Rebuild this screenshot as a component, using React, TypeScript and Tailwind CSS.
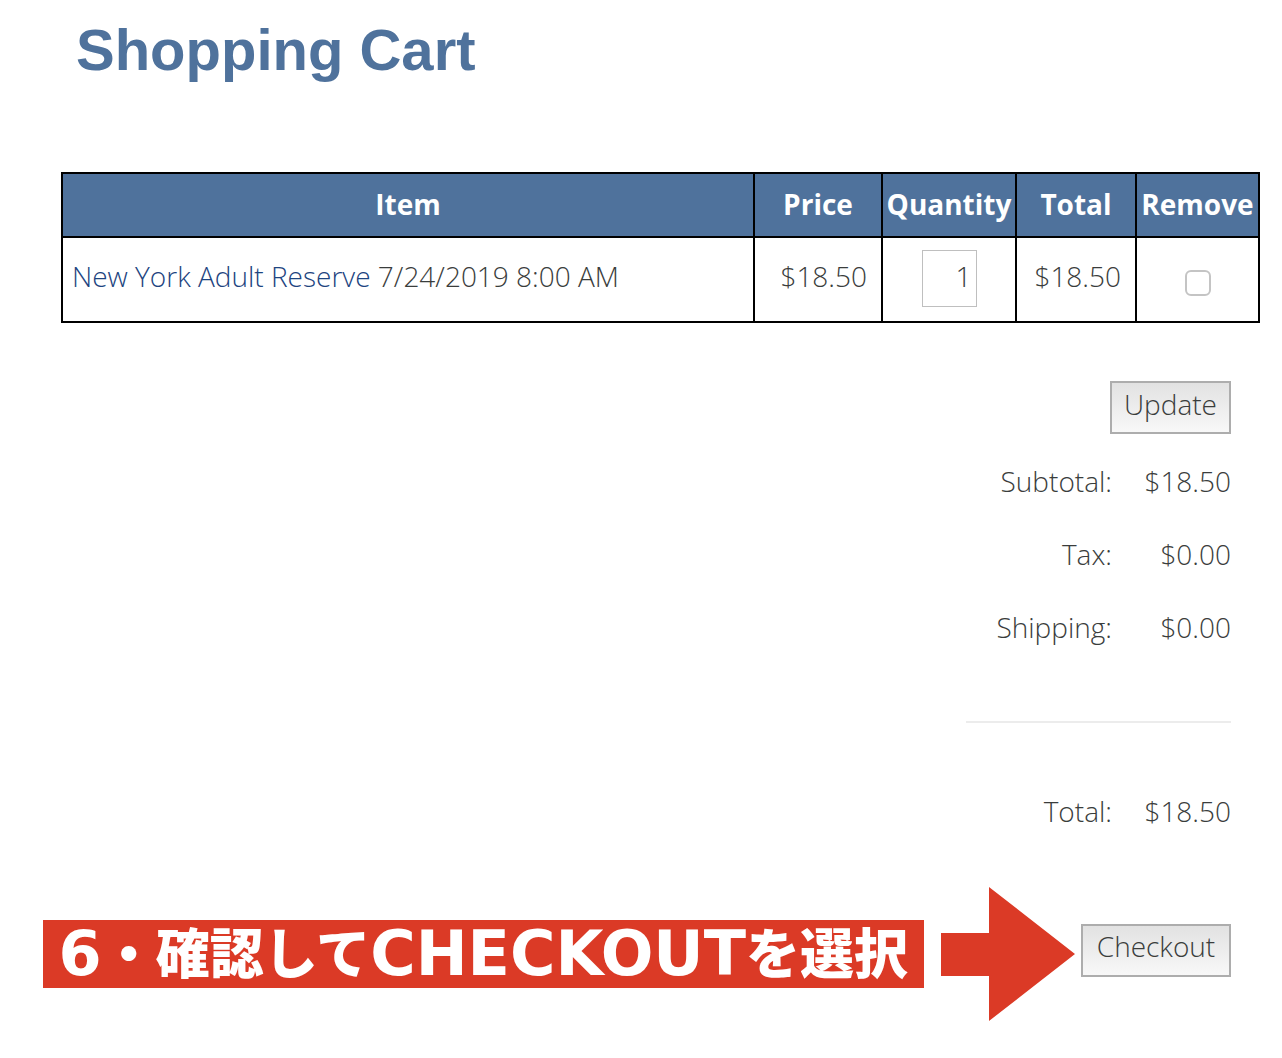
const items = [
  {
    name: "New York Adult Reserve",
    date: "7/24/2019 8:00 AM",
    price: "$18.50",
    quantity: 1,
    total: "$18.50",
  },
];

const summary = [
  { label: "Subtotal:", value: "$18.50" },
  { label: "Tax:", value: "$0.00" },
  { label: "Shipping:", value: "$0.00" },
];

function SummaryRow({ label, value }: { label: string; value: string }) {
  return (
    <div className="flex h-[73px] items-center justify-end text-right">
      <dt>{label}</dt>
      <dd className="w-[119px]">{value}</dd>
    </div>
  );
}

function CartButton({ children, className = "" }: { children: string; className?: string }) {
  return (
    <button
      type="button"
      className={`h-[53px] shrink-0 border-2 border-[#adadad] bg-linear-to-b from-[#e2e2e2] to-[#f8f8f8] px-3 pb-2 leading-9 ${className}`}
    >
      {children}
    </button>
  );
}

function CartTable() {
  const th = "border-2 border-black px-0 pt-0 pb-0.5 font-bold";
  const td = "border-2 border-black p-0";

  return (
    <table className="w-full table-fixed border-collapse">
      <thead className="bg-[#4f729c] text-white">
        <tr className="h-16">
          <th className={th}>Item</th>
          <th className={`${th} w-32`}>Price</th>
          <th className={`${th} w-[134px]`}>Quantity</th>
          <th className={`${th} w-[120px]`}>Total</th>
          <th className={`${th} w-[123px]`}>Remove</th>
        </tr>
      </thead>
      <tbody>
        {items.map((item) => (
          <tr key={item.name} className="h-[85px]">
            <td className={`${td} pb-2 pl-[9px]`}>
              <a href="#" className="text-[#1d4480]">
                {item.name}
              </a>{" "}
              {item.date}
            </td>
            <td className={`${td} pr-[14px] pb-2 text-right`}>{item.price}</td>
            <td className={`${td} pb-0.5 text-center`}>
              <input
                type="text"
                aria-label="Quantity"
                defaultValue={item.quantity}
                className="h-[57px] w-[55px] border border-[#bfbfbf] pr-1 pb-1.5 text-right align-middle"
              />
            </td>
            <td className={`${td} pr-[14px] pb-2 text-right`}>{item.total}</td>
            <td className={`${td} text-center`}>
              <input
                type="checkbox"
                aria-label="Remove"
                className="size-[26px] appearance-none rounded-md border-2 border-[#c4c4c4] align-middle"
              />
            </td>
          </tr>
        ))}
      </tbody>
    </table>
  );
}

export default function App() {
  return (
    <main className="bg-white pb-9 font-['Open_Sans',sans-serif] text-[28px] leading-9 font-light text-[#3a3d3c]">
      <h1 className="pt-4 pl-[76px] font-['Liberation_Sans',sans-serif] text-[58px] leading-[68px] font-bold text-[#4f729c]">
        Shopping Cart
      </h1>

      <section className="mt-[88px] pr-[22px] pl-[61px]">
        <CartTable />
      </section>

      <section className="mt-[58px] flex flex-col items-end pr-[51px]">
        <CartButton>Update</CartButton>
        <dl className="mt-2.5 w-[265px]">
          {summary.map((row) => (
            <SummaryRow key={row.label} label={row.label} value={row.value} />
          ))}
          <div className="mt-[58px] mb-[51px] border-t-2 border-[#ececec]" />
          <SummaryRow label="Total:" value="$18.50" />
        </dl>
      </section>

      <section className="mt-10 flex items-center justify-end pr-[51px]">
        <p className="flex h-[68px] items-center bg-[#db3a26] px-4 font-['DejaVu_Sans','Noto_Sans_CJK_JP',sans-serif] text-[62px] leading-none font-bold whitespace-nowrap text-white">
          <span>6</span>
          <span className="pb-1.5 font-['Noto_Sans_CJK_JP',sans-serif] text-[54px] font-black">・確認して</span>
          <span>CHECKOUT</span>
          <span className="pb-1.5 font-['Noto_Sans_CJK_JP',sans-serif] text-[54px] font-black">を選択</span>
        </p>
        <svg viewBox="0 0 134 134" className="mr-[6px] ml-[17px] size-[134px] shrink-0" aria-hidden="true">
          <path d="M0 46H48V0L134 67L48 134V89H0Z" fill="#db3a26" />
        </svg>
        <div className="pb-2">
          <CartButton className="min-w-[150px]">Checkout</CartButton>
        </div>
      </section>
    </main>
  );
}
